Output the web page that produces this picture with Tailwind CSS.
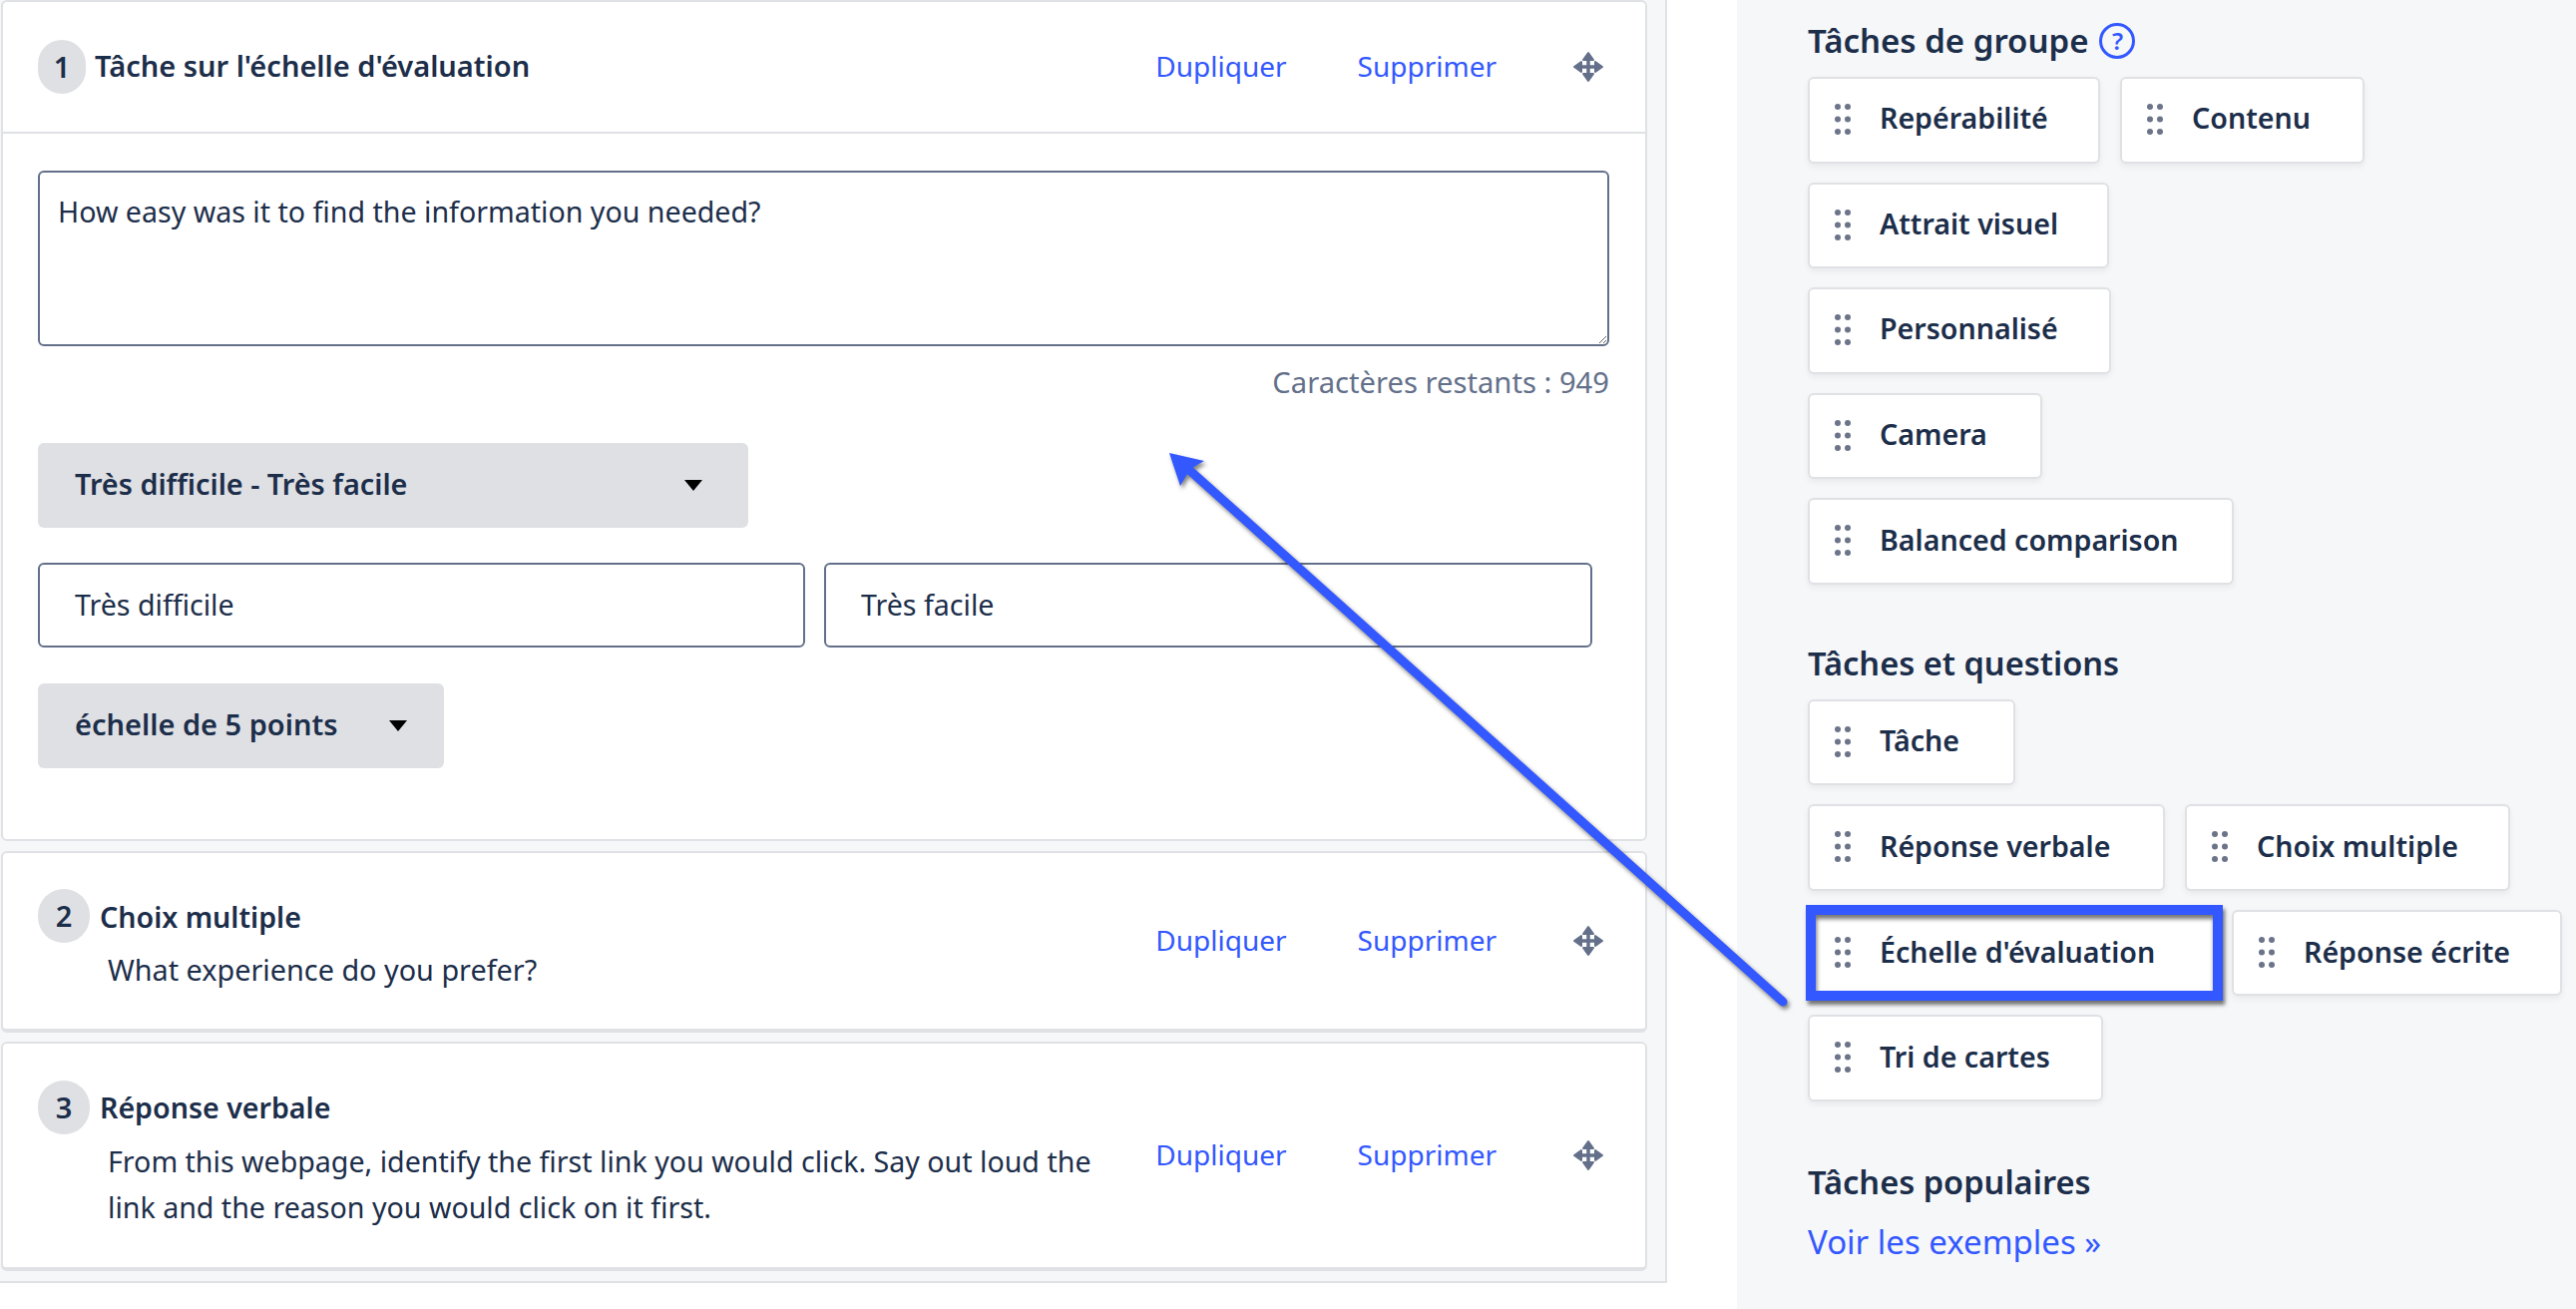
<!DOCTYPE html>
<html lang="fr">
<head>
<meta charset="UTF-8" />
<title>Tâches</title>
<script src="https://cdn.jsdelivr.net/npm/@tailwindcss/browser@4"></script>
</head>
<body class="relative h-[1312px] w-[2582px] overflow-hidden bg-white font-['Noto_Sans','Open_Sans',sans-serif] text-[#1c2e4a]">
<div class="flex h-[1312px]">

  <!-- left column -->
  <div class="w-[1671px] shrink-0">
    <div class="flex h-[1286px] flex-col border-r-2 border-b-2 border-[#e0e1e5] bg-[#f6f7f9] pr-[18px]">

      <!-- card 1 -->
      <div class="ml-[1px] h-[843px] rounded-[6px] border-2 border-[#e0e1e5] bg-white">
        <div class="flex h-[132px] items-center border-b-2 border-[#e0e1e5] pl-[35px] pr-[41px]">
          <span class="flex h-[54px] w-[48px] items-center justify-center rounded-full bg-[#dfe0e4] text-[29px] font-semibold">1</span>
          <span class="mb-[3px] ml-[9px] flex-1 text-[29px] font-semibold">Tâche sur l'échelle d'évaluation</span>
          <a class="mb-[3px] text-[28px] text-[#3358ff]">Dupliquer</a>
          <a class="mb-[3px] ml-[71px] text-[28px] text-[#3358ff]">Supprimer</a>
          <svg class="ml-[76px]" width="32" height="32" viewBox="0 0 32 32" fill="#64708a" stroke="#64708a" stroke-width="2" stroke-linejoin="round"><path d="M16 2l5 7H11zM16 30l-5-7h10zM2 16l7-5v10zM30 16l-7 5V11z"/><path d="M16 6v20M6 16h20" fill="none" stroke-width="3.5"/></svg>
        </div>
        <div class="pl-[35px] pr-[35px]">
          <textarea class="mt-[37px] block h-[176px] w-[1575px] rounded-[6px] border-2 border-[#64708a] px-[18px] py-[19px] text-[28.6px] leading-[40px] text-[#1c2e4a] outline-none">How easy was it to find the information you needed?</textarea>
          <p class="mt-[18px] w-[1575px] text-right text-[29.2px] leading-[36px] text-[#64708a]">Caractères restants : 949</p>
          <div class="mt-[43px] flex h-[85px] w-[712px] items-center justify-between rounded-[6px] bg-[#dfe0e4] pl-[37px] pr-[46px] text-[28.8px] font-semibold">
            <span class="mb-[3px]">Très difficile - Très facile</span>
            <span class="h-0 w-0 border-x-[9px] border-t-[11px] border-x-transparent border-t-black"></span>
          </div>
          <div class="mt-[35px] flex gap-[19px]">
            <div class="flex h-[85px] w-[769px] items-center rounded-[6px] border-2 border-[#64708a] pl-[35px] text-[28.6px]">Très difficile</div>
            <div class="flex h-[85px] w-[770px] items-center rounded-[6px] border-2 border-[#64708a] pl-[35px] text-[28.6px]">Très facile</div>
          </div>
          <div class="mt-[36px] flex h-[85px] w-[407px] items-center justify-between rounded-[6px] bg-[#dfe0e4] pl-[37px] pr-[37px] text-[29px] font-semibold">
            <span class="mb-[3px]">échelle de 5 points</span>
            <span class="h-0 w-0 border-x-[9px] border-t-[11px] border-x-transparent border-t-black"></span>
          </div>
        </div>
      </div>

      <!-- card 2 -->
      <div class="ml-[1px] mt-[10px] flex h-[182px] items-center rounded-[6px] border-2 border-b-4 border-[#e0e1e5] bg-white pl-[35px] pr-[41px]">
        <div class="flex-1">
          <div class="flex items-center">
            <span class="flex h-[54px] w-[52px] items-center justify-center rounded-full bg-[#dfe0e4] text-[29px] font-semibold">2</span>
            <span class="ml-[10px] mt-[2px] text-[28.6px] font-semibold">Choix multiple</span>
          </div>
          <p class="ml-[70px] mt-[4px] text-[28.8px] leading-[46px]">What experience do you prefer?</p>
        </div>
        <a class="mb-[3px] text-[28px] text-[#3358ff]">Dupliquer</a>
        <a class="mb-[3px] ml-[71px] text-[28px] text-[#3358ff]">Supprimer</a>
        <svg class="ml-[76px]" width="32" height="32" viewBox="0 0 32 32" fill="#64708a" stroke="#64708a" stroke-width="2" stroke-linejoin="round"><path d="M16 2l5 7H11zM16 30l-5-7h10zM2 16l7-5v10zM30 16l-7 5V11z"/><path d="M16 6v20M6 16h20" fill="none" stroke-width="3.5"/></svg>
      </div>

      <!-- card 3 -->
      <div class="ml-[1px] mt-[9px] flex h-[230px] items-center rounded-[6px] border-2 border-b-4 border-[#e0e1e5] bg-white pl-[35px] pr-[41px]">
        <div class="flex-1">
          <div class="flex items-center">
            <span class="flex h-[54px] w-[52px] items-center justify-center rounded-full bg-[#dfe0e4] text-[29px] font-semibold">3</span>
            <span class="ml-[10px] text-[28.6px] font-semibold">Réponse verbale</span>
          </div>
          <p class="ml-[70px] mt-[4px] w-[1010px] text-[28.6px] leading-[46px]">From this webpage, identify the first link you would click. Say out loud the link and the reason you would click on it first.</p>
        </div>
        <a class="mb-[3px] text-[28px] text-[#3358ff]">Dupliquer</a>
        <a class="mb-[3px] ml-[71px] text-[28px] text-[#3358ff]">Supprimer</a>
        <svg class="ml-[76px]" width="32" height="32" viewBox="0 0 32 32" fill="#64708a" stroke="#64708a" stroke-width="2" stroke-linejoin="round"><path d="M16 2l5 7H11zM16 30l-5-7h10zM2 16l7-5v10zM30 16l-7 5V11z"/><path d="M16 6v20M6 16h20" fill="none" stroke-width="3.5"/></svg>
      </div>
    </div>
  </div>

  <!-- sidebar -->
  <div class="ml-[70px] flex-1 bg-[#f6f7f9] pl-[71px]">
    <h2 class="mt-[22px] flex h-[38px] items-center gap-[11px] text-[33px] font-semibold">
      Tâches de groupe
      <span class="flex h-[36px] w-[36px] items-center justify-center rounded-full border-[3px] border-[#3358ff] text-[24px] font-semibold text-[#3358ff]">?</span>
    </h2>

    <div class="mt-[17px] flex flex-col gap-y-[19px] text-[28.6px] font-semibold">
      <div class="flex gap-x-[20px]">
        <div class="flex h-[86.5px] w-[293px] items-center gap-[29px] rounded-[6px] border-2 border-[#e0e1e5] bg-white pl-[25px] shadow-[0_3px_6px_rgba(0,0,0,0.06)]"><svg width="16" height="32" viewBox="0 0 16 32" fill="#6b7488"><circle cx="3" cy="3" r="3"/><circle cx="13" cy="3" r="3"/><circle cx="3" cy="15.5" r="3"/><circle cx="13" cy="15.5" r="3"/><circle cx="3" cy="28" r="3"/><circle cx="13" cy="28" r="3"/></svg><span class="mb-[3px]">Repérabilité</span></div>
        <div class="flex h-[86.5px] w-[245px] items-center gap-[29px] rounded-[6px] border-2 border-[#e0e1e5] bg-white pl-[25px] shadow-[0_3px_6px_rgba(0,0,0,0.06)]"><svg width="16" height="32" viewBox="0 0 16 32" fill="#6b7488"><circle cx="3" cy="3" r="3"/><circle cx="13" cy="3" r="3"/><circle cx="3" cy="15.5" r="3"/><circle cx="13" cy="15.5" r="3"/><circle cx="3" cy="28" r="3"/><circle cx="13" cy="28" r="3"/></svg><span class="mb-[3px]">Contenu</span></div>
      </div>
      <div class="flex h-[86.5px] w-[302px] items-center gap-[29px] rounded-[6px] border-2 border-[#e0e1e5] bg-white pl-[25px] shadow-[0_3px_6px_rgba(0,0,0,0.06)]"><svg width="16" height="32" viewBox="0 0 16 32" fill="#6b7488"><circle cx="3" cy="3" r="3"/><circle cx="13" cy="3" r="3"/><circle cx="3" cy="15.5" r="3"/><circle cx="13" cy="15.5" r="3"/><circle cx="3" cy="28" r="3"/><circle cx="13" cy="28" r="3"/></svg><span class="mb-[3px]">Attrait visuel</span></div>
      <div class="flex h-[86.5px] w-[304px] items-center gap-[29px] rounded-[6px] border-2 border-[#e0e1e5] bg-white pl-[25px] shadow-[0_3px_6px_rgba(0,0,0,0.06)]"><svg width="16" height="32" viewBox="0 0 16 32" fill="#6b7488"><circle cx="3" cy="3" r="3"/><circle cx="13" cy="3" r="3"/><circle cx="3" cy="15.5" r="3"/><circle cx="13" cy="15.5" r="3"/><circle cx="3" cy="28" r="3"/><circle cx="13" cy="28" r="3"/></svg><span class="mb-[3px]">Personnalisé</span></div>
      <div class="flex h-[86.5px] w-[235px] items-center gap-[29px] rounded-[6px] border-2 border-[#e0e1e5] bg-white pl-[25px] shadow-[0_3px_6px_rgba(0,0,0,0.06)]"><svg width="16" height="32" viewBox="0 0 16 32" fill="#6b7488"><circle cx="3" cy="3" r="3"/><circle cx="13" cy="3" r="3"/><circle cx="3" cy="15.5" r="3"/><circle cx="13" cy="15.5" r="3"/><circle cx="3" cy="28" r="3"/><circle cx="13" cy="28" r="3"/></svg><span class="mb-[3px]">Camera</span></div>
      <div class="flex h-[86.5px] w-[427px] items-center gap-[29px] rounded-[6px] border-2 border-[#e0e1e5] bg-white pl-[25px] shadow-[0_3px_6px_rgba(0,0,0,0.06)]"><svg width="16" height="32" viewBox="0 0 16 32" fill="#6b7488"><circle cx="3" cy="3" r="3"/><circle cx="13" cy="3" r="3"/><circle cx="3" cy="15.5" r="3"/><circle cx="13" cy="15.5" r="3"/><circle cx="3" cy="28" r="3"/><circle cx="13" cy="28" r="3"/></svg><span class="mb-[2px]">Balanced comparison</span></div>
    </div>

    <h2 class="mt-[60px] h-[38px] text-[32.6px] font-semibold leading-[38px]">Tâches et questions</h2>

    <div class="mt-[17px] flex flex-col gap-y-[19px] text-[28.6px] font-semibold">
      <div class="flex h-[86.5px] w-[208px] items-center gap-[29px] rounded-[6px] border-2 border-[#e0e1e5] bg-white pl-[25px] shadow-[0_3px_6px_rgba(0,0,0,0.06)]"><svg width="16" height="32" viewBox="0 0 16 32" fill="#6b7488"><circle cx="3" cy="3" r="3"/><circle cx="13" cy="3" r="3"/><circle cx="3" cy="15.5" r="3"/><circle cx="13" cy="15.5" r="3"/><circle cx="3" cy="28" r="3"/><circle cx="13" cy="28" r="3"/></svg><span class="mb-[2px]">Tâche</span></div>
      <div class="flex gap-x-[20px]">
        <div class="flex h-[86.5px] w-[358px] items-center gap-[29px] rounded-[6px] border-2 border-[#e0e1e5] bg-white pl-[25px] shadow-[0_3px_6px_rgba(0,0,0,0.06)]"><svg width="16" height="32" viewBox="0 0 16 32" fill="#6b7488"><circle cx="3" cy="3" r="3"/><circle cx="13" cy="3" r="3"/><circle cx="3" cy="15.5" r="3"/><circle cx="13" cy="15.5" r="3"/><circle cx="3" cy="28" r="3"/><circle cx="13" cy="28" r="3"/></svg><span class="mb-[1px]">Réponse verbale</span></div>
        <div class="flex h-[86.5px] w-[326px] items-center gap-[29px] rounded-[6px] border-2 border-[#e0e1e5] bg-white pl-[25px] shadow-[0_3px_6px_rgba(0,0,0,0.06)]"><svg width="16" height="32" viewBox="0 0 16 32" fill="#6b7488"><circle cx="3" cy="3" r="3"/><circle cx="13" cy="3" r="3"/><circle cx="3" cy="15.5" r="3"/><circle cx="13" cy="15.5" r="3"/><circle cx="3" cy="28" r="3"/><circle cx="13" cy="28" r="3"/></svg><span class="mb-[1px]">Choix multiple</span></div>
      </div>
      <div class="flex gap-x-[9px]">
        <div class="relative flex h-[86.5px] w-[416px] items-center gap-[29px] bg-white pl-[27px]"><svg width="16" height="32" viewBox="0 0 16 32" fill="#6b7488"><circle cx="3" cy="3" r="3"/><circle cx="13" cy="3" r="3"/><circle cx="3" cy="15.5" r="3"/><circle cx="13" cy="15.5" r="3"/><circle cx="3" cy="28" r="3"/><circle cx="13" cy="28" r="3"/></svg><span class="mb-[1px]">Échelle d'évaluation</span>
          <div class="absolute -left-[2px] -top-[5px] h-[96px] w-[418px] border-[10px] border-[#3358ff] shadow-[2px_4px_4px_rgba(0,0,0,0.55),inset_1px_4px_4px_rgba(0,0,0,0.55)]"></div>
        </div>
        <div class="flex h-[86.5px] w-[331px] items-center gap-[29px] rounded-[6px] border-2 border-[#e0e1e5] bg-white pl-[25px] shadow-[0_3px_6px_rgba(0,0,0,0.06)]"><svg width="16" height="32" viewBox="0 0 16 32" fill="#6b7488"><circle cx="3" cy="3" r="3"/><circle cx="13" cy="3" r="3"/><circle cx="3" cy="15.5" r="3"/><circle cx="13" cy="15.5" r="3"/><circle cx="3" cy="28" r="3"/><circle cx="13" cy="28" r="3"/></svg><span class="mb-[1px]">Réponse écrite</span></div>
      </div>
      <div class="flex h-[86.5px] w-[296px] items-center gap-[29px] rounded-[6px] border-2 border-[#e0e1e5] bg-white pl-[25px] shadow-[0_3px_6px_rgba(0,0,0,0.06)]"><svg width="16" height="32" viewBox="0 0 16 32" fill="#6b7488"><circle cx="3" cy="3" r="3"/><circle cx="13" cy="3" r="3"/><circle cx="3" cy="15.5" r="3"/><circle cx="13" cy="15.5" r="3"/><circle cx="3" cy="28" r="3"/><circle cx="13" cy="28" r="3"/></svg><span class="mb-[1px]">Tri de cartes</span></div>
    </div>

    <h2 class="mt-[62px] h-[38px] text-[32.6px] font-semibold leading-[38px]">Tâches populaires</h2>
    <a class="mt-[22px] block text-[33px] leading-[38px] text-[#3358ff]">Voir les exemples »</a>
  </div>
</div>

<!-- annotation arrow over the page -->
<svg class="pointer-events-none absolute left-0 top-0 drop-shadow-[2px_3px_2px_rgba(0,0,0,0.5)]" width="2582" height="1312" viewBox="0 0 2582 1312">
  <path d="M1192 471L1787 1004" stroke="#3358ff" stroke-width="9" stroke-linecap="round" fill="none"/>
  <path d="M1172 454L1207 462L1193 470L1183 487Z" fill="#3358ff"/>
</svg>
</body>
</html>
